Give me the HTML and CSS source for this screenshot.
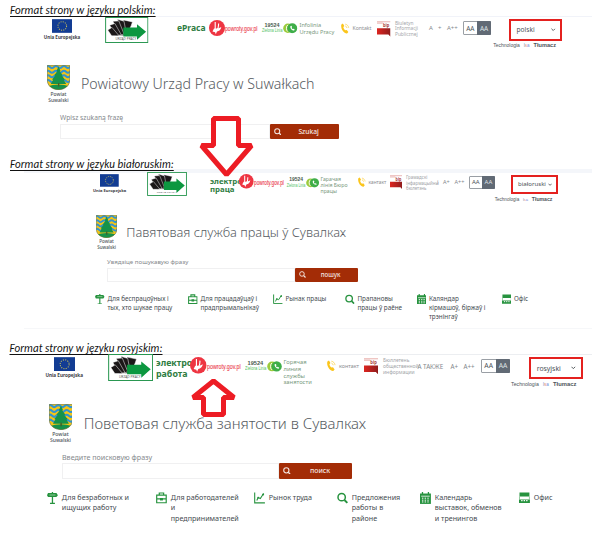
FILE: index.html
```
<!DOCTYPE html>
<html lang="pl">
<head>
<meta charset="utf-8">
<title>Powiatowy Urząd Pracy w Suwałkach</title>
<link rel="stylesheet" href="styles.css">
</head>
<body>
<svg class="sprite" aria-hidden="true">
  <symbol id="flag" viewBox="0 0 21 14"><rect width="21" height="14" fill="#123c93"/><circle cx="10.5" cy="7" r="4.400" fill="none" stroke="#b9b45e" stroke-width="1.100" stroke-dasharray="1.100 1.200"/></symbol>
  <symbol id="pup" viewBox="0 0 133 80">
    <rect x="1.5" y="1.5" width="130" height="77" fill="#fff" stroke="#27964f" stroke-width="3"/>
    <g fill="#1b1718" stroke="#fff" stroke-width="1.500"><path d="M56 9l28 6-4 12-14 30H52z"/><path d="M38 7l20 6 8 42-18 3z"/><path d="M24 13l18-1 16 40-14 6z"/><path d="M14 25l16-5 20 35-17 3z"/><path d="M8 40l13-8 22 26H20z"/></g>
    <path d="M56 32h42V22l28 23-28 25V60H56z" fill="#0c9740"/>
    <text x="32" y="71" font-size="8" textLength="64" lengthAdjust="spacingAndGlyphs" fill="#555">URZĄD PRACY</text>
  </symbol>
  <symbol id="swallow" viewBox="0 0 16 16"><circle cx="8" cy="8" r="8" fill="#ee3542"/><path d="M6.200 2v7.500M9.600 3.500c-.3 3 .2 4.500-1.400 6" fill="none" stroke="#fff" stroke-width="1.100"/><path d="M5 8.500c3 0 5.500-.2 7.300-1.600-.2 2.600-2.300 4.200-4.300 4.600l-1.200 2.700-.7-2-2.600-.7z" fill="#fff"/></symbol>
  <symbol id="calls" viewBox="0 0 15 11"><circle cx="5" cy="5.500" r="4.900" fill="#9ccb3c"/><path d="M5 2C3 3 3 8 5 9" stroke="#fff" fill="none"/><circle cx="9.600" cy="5.500" r="5.200" fill="#3fae49"/><path d="M7.600 3.300c-.4 2.200 1.700 4.600 4 4.500l.6-1-1.400-.9-.8.5c-.6-.3-.9-.8-1.100-1.400l.6-.6-.7-1.500z" fill="#fff"/></symbol>
  <symbol id="phone" viewBox="0 0 9 11"><path d="M.4 1.200 2 .3l1.500 2.500-1 1.100c.2 1.500 1 2.700 2.200 3.500l1.400-.4 1.700 2.300-1.400 1.500C3 11.200-.8 5.400.4 1.200z" fill="#fbc51c"/><path d="M4.500 2.800c1 .3 1.700 1.100 1.900 2.200M4.500.9c2 .3 3.400 1.900 3.800 4" fill="none" stroke="#fcd65c" stroke-width=".9"/></symbol>
  <symbol id="bip" viewBox="0 0 14 16"><path d="M0 .5h14M0 1.900h6" stroke="#e39b97" stroke-width=".8"/><text x="6.300" y="6" font-size="5" font-weight="700" fill="#a83d39" textLength="6.500" lengthAdjust="spacingAndGlyphs">bip</text><path d="M0 7.200h14V16l-2.200-2.400H0z" fill="url(#redfade)"/></symbol>
  <linearGradient id="redfade"><stop offset="0" stop-color="#dd2520"/><stop offset="1" stop-color="#8e1c1c"/></linearGradient>
  <symbol id="crest" viewBox="0 0 23 25">
    <clipPath id="shield"><path d="M.3.3h22.400V15c0 6-5 9.500-11.200 9.700C5.300 24.500.3 21 .3 15z"/></clipPath>
    <g clip-path="url(#shield)"><path d="M0 0h23v25H0z" fill="#f6c515"/><path d="M-1 2q2-2 4 0t4 0 4 0 4 0 4 0 4 0 4 0M-1 6.700q2-2 4 0t4 0 4 0 4 0 4 0 4 0 4 0M-1 11.300q2-2 4 0t4 0 4 0 4 0 4 0 4 0 4 0M-1 16q2-2 4 0t4 0 4 0 4 0 4 0 4 0 4 0" fill="none" stroke="#3394cf" stroke-width="2"/><path d="M0 21.500q11.500-4 23 0V25H0z" fill="#16924a"/><path d="M11.500 1.500 13.500 6l-.8.2 3 4-1 .3 3.200 4-1.100.4 2.400 4.100H3.800l2.400-4.100-1.100-.4 3.200-4-1-.3 3-4-.8-.2z" fill="#16924a"/><path d="M11 18h1.300v3.500H11z" fill="#4a5a25"/></g>
    <path d="M.3.3h22.400V15c0 6-5 9.500-11.200 9.700C5.300 24.500.3 21 .3 15z" fill="none" stroke="#576b45" stroke-width=".6"/>
  </symbol>
  <symbol id="search" viewBox="0 0 11 11"><circle cx="4.700" cy="4.700" r="3.700" fill="none" stroke="currentColor" stroke-width="1.500"/><path d="m7.500 7.500 2.900 2.900" stroke="currentColor" stroke-width="1.900"/></symbol>
  <symbol id="sign" viewBox="0 0 11 12"><path d="M1 1h8.500L11 3.200 9.500 5H1L0 3.200z" fill="currentColor"/><path d="M5.500 0v11.300M3 11.400h5" stroke="currentColor" stroke-width="1.300" fill="none"/><path d="M2.500 3h6" stroke="#a9d8b2" stroke-width=".8"/></symbol>
  <symbol id="case" viewBox="0 0 11 12"><path d="M.7 3.200h9.600v7.600H.7zM3.300 3V1h4.400v2M.7 7h9.600" fill="none" stroke="currentColor" stroke-width="1.200"/><path d="M4 6h3v2.500H4z" fill="currentColor"/></symbol>
  <symbol id="chart" viewBox="0 0 11 12"><path d="M.7.500v10.400H11M2.800 8.500l1.400-3 2.200 1L9 2.500M9.800 1.500l-1 1.500" fill="none" stroke="currentColor" stroke-width="1.100"/><circle cx="9.200" cy="2.500" r="1" fill="currentColor"/><circle cx="4.300" cy="5.700" r=".9" fill="currentColor"/></symbol>
  <symbol id="cal" viewBox="0 0 11 12"><path d="M0 1.500h11V12H0z" fill="currentColor"/><path d="M2.500 0v3M8.500 0v3" stroke="currentColor" stroke-width="1.300"/><path d="M1.200 4.200h8.600" stroke="#fff" stroke-width=".8"/><path d="M2 6.200h7M2 8.200h7M2 10h7" stroke="#fff" stroke-width="1" stroke-dasharray="1.400 1.300"/></symbol>
  <symbol id="office" viewBox="0 0 11 12"><path d="M.5.500h10V4.500H.5zM0 7.500h11V11H0z" fill="currentColor"/><path d="M.5 4.500v3M10.500 4.500v3" stroke="currentColor" stroke-width=".5"/><path d="M2.200 8.700h6.600" stroke="#fff" stroke-width="1.100" stroke-dasharray="1.400 1.100"/></symbol>
  <symbol id="chev" viewBox="0 0 4 3"><path d="m.4.600 1.600 1.600L3.600.600" fill="none" stroke="#4b4f54" stroke-width=".8"/></symbol>
</svg>

<section class="shot polish">
  <h2>Format strony w języku polskim:</h2>
  <div class="page">
    <header>
      <div class="eu"><svg><use href="#flag"/></svg><b>Unia Europejska</b></div>
      <svg class="pup"><use href="#pup"/></svg>
      <b class="epraca">ePraca</b>
      <div class="powroty"><svg><use href="#swallow"/></svg><span>powroty.gov.pl</span></div>
      <div class="line"><p><b>19524</b><span>Zielona Linia</span></p><svg><use href="#calls"/></svg></div>
      <p class="info">Infolinia<br>Urzędu Pracy</p>
      <div class="tel"><svg><use href="#phone"/></svg><span>Kontakt</span></div>
      <svg class="bip"><use href="#bip"/></svg>
      <p class="biptext">Biuletyn<br>Informacji<br>Publicznej</p>
      <span class="size">A</span><span class="size">+</span><span class="size">A++</span>
      <div class="contrast"><span>AA</span><span class="dark">AA</span></div>
      <div class="lang"><div class="select"><span>polski</span><svg><use href="#chev"/></svg></div>
        <p class="tech"><span>Technologia</span><i>l<em>s</em>a</i><b>Tłumacz</b></p></div>
    </header>
    <div class="brand"><div class="crest"><svg><use href="#crest"/></svg><p>Powiat<br>Suwalski</p></div><h1>Powiatowy Urząd Pracy w Suwałkach</h1></div>
    <form><label>Wpisz szukaną frazę</label><div class="field"><span class="input"></span><span class="button"><svg><use href="#search"/></svg><b>Szukaj</b></span></div></form>
  </div>
</section>

<section class="shot belarusian">
  <h2>Format strony w języku białoruskim:</h2>
  <div class="page">
    <header>
      <div class="eu"><svg><use href="#flag"/></svg><b>Unia Europejska</b></div>
      <svg class="pup"><use href="#pup"/></svg>
      <b class="epraca">электрон<br>праца</b>
      <div class="powroty"><svg><use href="#swallow"/></svg><span>powroty.gov.pl</span></div>
      <div class="line"><p><b>19524</b><span>Zielona Linia</span></p><svg><use href="#calls"/></svg></div>
      <p class="info">Гарачая<br>лінія Бюро<br>працы</p>
      <div class="tel"><svg><use href="#phone"/></svg><span>кантакт</span></div>
      <svg class="bip"><use href="#bip"/></svg>
      <p class="biptext">Грамадскі<br>інфармацыйны<br>бюлетэнь</p>
      <span class="size">і</span><span class="size">A+</span><span class="size">A++</span>
      <div class="contrast"><span>AA</span><span class="dark">AA</span></div>
      <div class="lang"><div class="select"><span>białoruski</span><svg><use href="#chev"/></svg></div>
        <p class="tech"><span>Technologia</span><i>l<em>s</em>a</i><b>Tłumacz</b></p></div>
    </header>
    <div class="brand"><div class="crest"><svg><use href="#crest"/></svg><p>Powiat<br>Suwalski</p></div><h1>Павятовая служба працы ў Сувалках</h1></div>
    <form><label>Увядзіце пошукавую фразу</label><div class="field"><span class="input"></span><span class="button"><svg><use href="#search"/></svg><b>пошук</b></span></div></form>
    <nav>
      <a><svg><use href="#sign"/></svg><span>Для беспрацоўных і<br>тых, хто шукае працу</span></a>
      <a><svg><use href="#case"/></svg><span>Для працадаўцаў і<br>прадпрымальнікаў</span></a>
      <a><svg><use href="#chart"/></svg><span>Рынак працы</span></a>
      <a><svg><use href="#search"/></svg><span>Прапановы<br>працы ў раёне</span></a>
      <a><svg><use href="#cal"/></svg><span>Каляндар<br>кірмашоў, біржаў і<br>трэнінгаў</span></a>
      <a><svg><use href="#office"/></svg><span>Офіс</span></a>
    </nav>
  </div>
</section>

<section class="shot russian">
  <h2>Format strony w języku rosyjskim:</h2>
  <div class="page">
    <header>
      <div class="eu"><svg><use href="#flag"/></svg><b>Unia Europejska</b></div>
      <svg class="pup"><use href="#pup"/></svg>
      <b class="epraca">электрон<br>работа</b>
      <div class="powroty"><svg><use href="#swallow"/></svg><span>powroty.gov.pl</span></div>
      <div class="line"><p><b>19524</b><span>Zielona Linia</span></p><svg><use href="#calls"/></svg></div>
      <p class="info">Горячая<br>линия<br>службы<br>занятости</p>
      <div class="tel"><svg><use href="#phone"/></svg><span>контакт</span></div>
      <svg class="bip"><use href="#bip"/></svg>
      <p class="biptext">Бюллетень<br>общественной<br>информации</p>
      <span class="size">А ТАКЖЕ</span><span class="size">A+</span><span class="size">A++</span>
      <div class="contrast"><span>AA</span><span class="dark">AA</span></div>
      <div class="lang"><div class="select"><span>rosyjski</span><svg><use href="#chev"/></svg></div>
        <p class="tech"><span>Technologia</span><i>l<em>s</em>a</i><b>Tłumacz</b></p></div>
    </header>
    <div class="brand"><div class="crest"><svg><use href="#crest"/></svg><p>Powiat<br>Suwalski</p></div><h1>Поветовая служба занятости в Сувалках</h1></div>
    <form><label>Введите поисковую фразу</label><div class="field"><span class="input"></span><span class="button"><svg><use href="#search"/></svg><b>поиск</b></span></div></form>
    <nav>
      <a><svg><use href="#sign"/></svg><span>Для безработных и<br>ищущих работу</span></a>
      <a><svg><use href="#case"/></svg><span>Для работодателей<br>и<br>предпринимателей</span></a>
      <a><svg><use href="#chart"/></svg><span>Рынок труда</span></a>
      <a><svg><use href="#search"/></svg><span>Предложения<br>работы в<br>районе</span></a>
      <a><svg><use href="#cal"/></svg><span>Календарь<br>выставок, обменов<br>и тренингов</span></a>
      <a><svg><use href="#office"/></svg><span>Офис</span></a>
    </nav>
  </div>
</section>

<svg class="arrow down" viewBox="0 0 56 62"><path d="M14.500 4.500h25v27h13L27.500 60.500 2.500 31.500h12z"/></svg>
<svg class="arrow up" viewBox="0 0 46 40"><path d="M22.500 2 43 18.500H32.500v17h-20v-17H2z"/></svg>
</body>
</html>
```
FILE: styles.css
```
* { box-sizing: border-box; }
body { margin: 0; width: 604px; height: 553px; overflow: hidden; position: relative; background: #fff; font-family: "Noto Sans", "Open Sans", sans-serif; color: #4d5359; white-space: nowrap; }
p, h1, h2 { margin: 0; }
svg { display: block; flex: none; }
.sprite { position: absolute; width: 0; height: 0; }

.shot { font-size: 10px; }
.polish { height: 155px; }
.belarusian { height: 184px; font-size: 9.200px; }
.russian { font-size: 10.400px; }

h2 { height: 16px; padding: 3px 0 0 10px; font: italic 500 11.100px/14px Carlito, Lato, sans-serif; letter-spacing: .06px; color: #111; text-decoration: underline; text-underline-offset: 1.500px; }
.belarusian h2 { height: 13.500px; padding-top: 1.500px; }
.russian h2 { height: 15px; padding: 2px 0 0 9.500px; }

.page { margin-left: 24px; width: 568px; border-top: 1px solid #f1f3f9; }
.belarusian .page { border-top: 4.500px solid #f4f6fa; }
.russian .page { border-color: #eceef1; }
.polish .page { padding-left: 20px; }
.belarusian .page { padding-left: 69px; height: 160px; border-bottom: 1px solid #f6f7f9; }
.russian .page { padding-left: 21.500px; }

header { display: grid; height: 27px; grid-template-rows: 27px; align-items: center; }
.polish header { grid-template-columns: 61px 72px 32px 53px 37.500px 41.500px 36px 18px 34px 9px 9px 15.500px 47.500px 51px; }
.belarusian header { height: 24.500px; grid-template-rows: 24.500px; grid-template-columns: 54px 63px 29px 48px 33.500px 37.500px 32px 16px 31px 6px 11.500px 14px 43.500px 45px; }
.russian header { grid-template-columns: 62.500px 48px 34px 55px 38.500px 43.500px 37px 19px 34.500px 33px 13px 17px 49.500px 51.500px; }

.eu { width: 3.600em; display: flex; flex-direction: column; align-items: center; gap: .1em; margin-top: -1px; }
.eu svg { width: 2.050em; height: 1.400em; }
.eu b { font-size: .45em; line-height: 1.500; color: #3d4045; }
.pup { width: 4.350em; height: 2.600em; margin-top: -1px; }
.epraca { font-size: .85em; line-height: 1.120; color: #2f7d42; margin-top: -5px; }
.belarusian .epraca { margin-top: 1px; }
.russian .epraca { margin-top: 1px; line-height: 1.200; }
.powroty { display: flex; align-items: center; margin-top: -6px; }
.powroty svg { width: 1.600em; height: 1.600em; position: relative; }
.powroty span { font: .6em "Liberation Sans Narrow", "Liberation Sans", sans-serif; width: 5.500em; color: #ec4350; transform: scale(.86, 1.300); transform-origin: 0 50%; -webkit-text-stroke: .1px #ec4350; }
.line { display: flex; align-items: center; gap: .1em; margin-top: -4px; }
.line p { width: 2em; display: flex; flex-direction: column; align-items: center; line-height: 1; }
.line p b { font: 700 .54em/1 "Liberation Sans Narrow", "Liberation Sans", sans-serif; color: #4a5a4d; }
.line p span { font: .500em/1.100 "Liberation Sans Narrow", "Liberation Sans", sans-serif; color: #4fc262; transform: scaleX(.72); }
.line svg { width: 1.450em; height: 1.050em; }
.info { font-size: .56em; line-height: 1.140; color: #7b9a80; margin-top: -4px; }
.belarusian .info { margin-top: 1px; font-size: .57em; }
.russian .info { margin-top: 8px; }
.tel { display: flex; align-items: center; gap: .3em; margin-top: -5px; }
.tel svg { width: .85em; height: 1.100em; }
.tel span { font-size: .52em; color: #8b8d90; }
.bip { width: 1.350em; height: 1.600em; margin-top: -4px; }
.biptext { font-size: .48em; line-height: 1.170; color: #a3a5a9; margin-top: -3px; }
.size { font-size: .6em; color: #84888d; margin-top: -5px; }
.contrast { display: flex; width: 2.850em; height: 1.400em; border: 1px solid #9a9fa5; border-radius: 1px; margin-top: -5px; }
.contrast span { flex: 1; font-size: .65em; display: flex; align-items: center; justify-content: center; }
.contrast .dark { background: #616a75; color: #dfe2e6; margin: -1px -1px -1px 0; border-radius: 0 1px 1px 0; }
.lang { display: flex; flex-direction: column; align-items: flex-end; align-self: start; padding-top: 3px; }
.select { width: 100%; height: 1.950em; border: 1.600px solid #e4211f; outline: .4px solid #e4211f; display: flex; align-items: center; justify-content: space-between; padding: 0 .45em 0 .55em; }
.select span { font-size: .66em; }
.select svg { width: .45em; height: .35em; }
.tech { display: flex; align-items: baseline; gap: .4em; padding-right: .5em; margin-top: .25em; line-height: .8em; }
.tech span { font: .5em "Liberation Sans", sans-serif; }
.tech i { font: .45em "Liberation Sans", sans-serif; color: #6e8fd6; }
.tech em { font-style: normal; color: #e98b6a; }
.tech b { font: 700 .56em "Liberation Sans", sans-serif; }

.brand { display: flex; align-items: center; height: 39px; margin: 21px 0 0 3px; }
.crest { width: 2.300em; margin-right: 1.100em; display: flex; flex-direction: column; align-items: center; }
.crest svg { width: 2.300em; height: 2.500em; }
.crest p { font-size: .49em; line-height: 1.180; margin-top: .3em; text-align: center; font-weight: 500; }
h1 { font: 300 1.420em/1.300 "Noto Sans", "Open Sans", sans-serif; color: #565b61; }
.belarusian .brand { height: 35px; margin-top: 18px; }
.belarusian .crest { margin-right: 1em; }
.belarusian h1 { font-size: 1.395em; }
.russian .brand { margin-top: 22px; }
.russian h1 { font-size: 1.437em; }

form { margin: 9px 0 0 16px; }
label { display: block; height: 10.500px; font-size: .67em; line-height: 10px; color: #85898d; }
.field { display: flex; height: 15.500px; }
.input { width: 209.500px; border: 1px solid #f0f0f1; }
.button { width: 69.500px; background: #a32c06; color: #f4e6e1; border-radius: 1px; display: flex; align-items: center; padding-left: .4em; }
.button svg { width: .75em; height: .75em; }
.button b { flex: 1; text-align: center; font-size: .67em; font-weight: 500; padding-right: .4em; }
.belarusian form { margin: 7px 0 0 14px; }
.belarusian .field { height: 14px; }
.belarusian .input { width: 188px; }
.belarusian .button { width: 63px; }
.russian form { margin: 9px 0 0 16.500px; }
.russian label { font-size: .685em; }
.russian .field { height: 16px; }
.russian .input { width: 217px; }
.russian .button { width: 73px; }

nav { display: grid; color: #454b50; }
nav a { display: flex; gap: .3em; align-items: flex-start; }
nav svg { width: 1.050em; height: 1.150em; color: #27933f; }
nav span { font-size: .69em; line-height: 1.450; }
.belarusian nav { margin: 12px 0 0 2px; grid-template-columns: 93px 85px 72px 71.500px 85px 60px; }
.russian nav { margin: 13.500px 0 0 1.500px; grid-template-columns: 109px 98px 83px 83px 99px 60px; }
.russian nav a { gap: .37em; }

.arrow { position: absolute; fill: #fff; stroke: #ed1c24; stroke-width: 5; stroke-linejoin: bevel; }
.down { left: 199px; top: 114px; width: 56px; height: 62px; overflow: visible; }
.up { left: 191px; top: 379px; width: 46px; height: 40px; overflow: visible; }
```
